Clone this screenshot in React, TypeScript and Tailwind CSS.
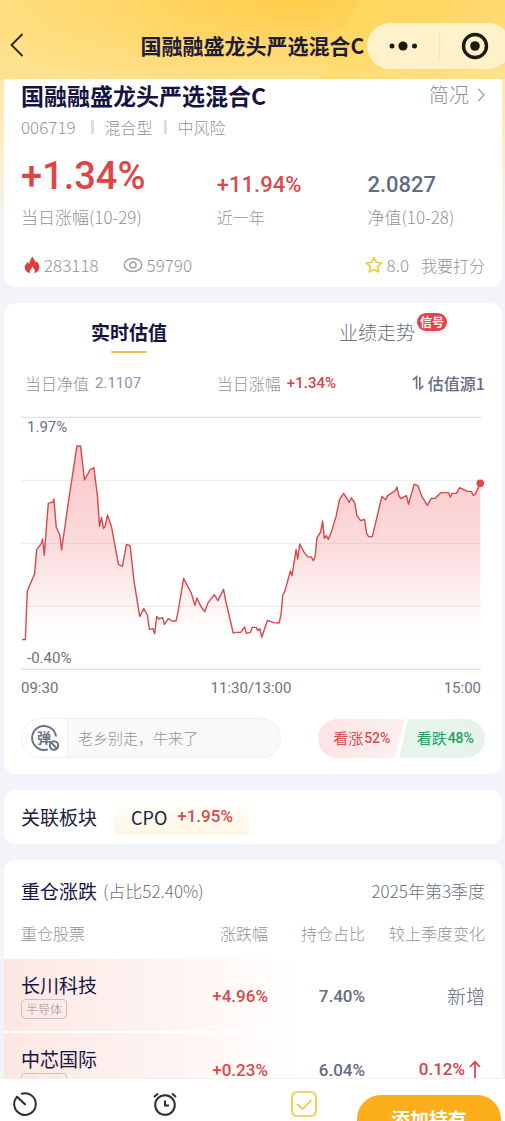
import React from "react";

const TREND = [
  "3,668 13,668 19,522 41,470 47,398 61,380 65,366 70,415 82,259 96,255 99,246 106,331 117,355 122,399 145,239 168,87 179,87 191,189 208,158 219,152 230,239 236,328 242,301 248,334 253,329 260,294 272,329 293,442 305,448 317,382 328,386 340,494 357,599 369,575 380,594 386,637 397,635 402,650 408,598 414,606 426,602 431,622 443,605 454,612 466,612 471,591 489,484 512,528 523,565 529,543 540,567 552,584 563,556 581,533 592,551 609,517 615,549 638,648 644,646 661,646 672,630 678,649 690,646",
  "695,631 707,631 712,641 718,635 724,661 741,610 760,617 776,618 782,591 787,534 793,524 810,462 815,476 827,398 832,426 838,381 850,404 861,419 873,420 879,431 884,420 890,362 901,345 907,312 912,364 918,356 924,367 935,339 947,299 958,247 970,229 987,256 993,242 1004,259 1010,296 1021,311 1033,307 1039,349 1045,359 1056,359 1073,289 1085,238 1096,248 1102,236 1125,221 1130,210 1136,235 1142,245 1159,236 1165,262 1182,202 1193,205 1205,238 1222,265 1233,244 1245,244 1262,227 1285,227 1291,241 1296,229 1309,229 1319,212 1342,223 1354,223 1360,235 1365,233 1377,207 1381,199",
].join(" ");

const GRID_LINES = [1, 190, 379, 568, 757];

const HOLDINGS = [
  { name: "长川科技", sector: "半导体", change: "+4.96%", share: "7.40%", delta: "新增", up: false },
  { name: "中芯国际", sector: "半导体", change: "+0.23%", share: "6.04%", delta: "0.12%", up: true },
];

const NUM = "font-['Roboto','Noto_Sans_CJK_SC',sans-serif] font-medium";

function Header() {
  return (
    <header className="relative flex h-[79px] shrink-0 items-end justify-between bg-[linear-gradient(115deg,transparent_66%,#ffdd6280_66.5%,#ffdd6200_90%),radial-gradient(ellipse_75%_120%_at_58%_0%,#ffcd49,#ffe28f)] pb-2.5 pl-2">
      <button aria-label="返回" className="flex h-12 w-6 items-center">
        <svg viewBox="0 0 16 26" className="h-[26px] w-4" fill="none" stroke="#26221a" strokeWidth="1.8">
          <path d="M14.5 2 L3.5 13 L14.5 24" />
        </svg>
      </button>
      <h1 className="absolute inset-x-0 bottom-5 text-center text-[21px] leading-7 font-bold text-[#1f1c35]">国融融盛龙头严选混合C</h1>
      <div className="relative -mr-1.5 flex h-[46px] w-36 items-center rounded-full bg-[#fff2cb]">
        <button aria-label="更多" className="flex h-full flex-1 items-center justify-center">
          <svg viewBox="0 0 30 12" className="h-3 w-[30px]" fill="#1d1a10">
            <circle cx="4" cy="6" r="2.5" />
            <circle cx="15" cy="6" r="4.6" />
            <circle cx="26.5" cy="6" r="2.5" />
          </svg>
        </button>
        <span className="h-7 w-px bg-[#f3e4b6]" />
        <button aria-label="关闭" className="flex h-full flex-1 items-center justify-center">
          <svg viewBox="0 0 28 28" className="h-7 w-7">
            <circle cx="14" cy="14" r="11.5" fill="none" stroke="#1d1a10" strokeWidth="3.4" />
            <circle cx="14" cy="14" r="4.8" fill="#1d1a10" />
          </svg>
        </button>
      </div>
    </header>
  );
}

function Summary() {
  return (
    <section className="rounded-b-xl bg-white px-[17px] pb-2.5 text-[17px] text-[#949494]">
      <div className="flex h-8 items-center justify-between">
        <h2 className="text-[23px] leading-8 font-bold text-[#15143f]">国融融盛龙头严选混合C</h2>
        <a href="#profile" className="flex items-center gap-2 text-[20px] leading-8 font-light text-[#8f8f8f]">
          简况
          <svg viewBox="0 0 8 14" className="h-3.5 w-2" fill="none" stroke="#a5a5a5" strokeWidth="1.3">
            <path d="M1 .8 L7 7 L1 13.2" />
          </svg>
        </a>
      </div>
      <div className="flex h-8 items-center gap-[11px] text-base font-light">
        <span className="mr-1 text-[17px]">006719</span>
        <span className="h-3.5 w-[3px] bg-[#dedede]" />
        <span>混合型</span>
        <span className="h-3.5 w-[3px] bg-[#dedede]" />
        <span>中风险</span>
      </div>
      <dl className="grid grid-cols-[65fr_50fr_39fr]">
        <div className="flex h-[90px] flex-col-reverse">
          <dt className="pb-0.5 leading-7 font-light">当日涨幅(10-29)</dt>
          <dd className={`${NUM} text-[38px] leading-[54px] text-[#e04545]`}>+1.34%</dd>
        </div>
        <div className="flex h-[90px] flex-col-reverse">
          <dt className="pb-0.5 text-base leading-7 font-light">近一年</dt>
          <dd className={`${NUM} text-[22px] leading-9 text-[#d94a4c]`}>+11.94%</dd>
        </div>
        <div className="flex h-[90px] flex-col-reverse">
          <dt className="pb-0.5 leading-7 font-light whitespace-nowrap">净值(10-28)</dt>
          <dd className={`${NUM} text-[22px] leading-9 text-[#646c80]`}>2.0827</dd>
        </div>
      </dl>
      <div className="mt-5 flex h-6 items-center font-light">
        <svg viewBox="0 0 16 18" className="mr-1 ml-[3px] h-[18px] w-4">
          <path d="M8.3 .6 C9.2 3 11.3 4 11.9 6.8 C12.4 6.2 12.6 5.6 12.6 4.9 C14.2 6.6 15.6 9 15.4 11.6 C15.2 14.6 13 16.8 10.4 17.3 C11.6 15 10.3 12.6 8.3 10.6 C7.7 13 5.1 14.4 6 17.3 C3.1 16.7 .8 14.5 .7 11.5 C.6 9 2.4 7.6 3.7 5.9 C4.2 6.6 4.6 7.3 5.2 7.9 C5.4 5 7 3 8.3 .6 Z" fill="#e33e3e" />
        </svg>
        <span>283118</span>
        <svg viewBox="0 0 20 16" className="mr-1 ml-6 h-4 w-5" fill="none" stroke="#a3a3a3" strokeWidth="1.5">
          <ellipse cx="10" cy="8" rx="8.8" ry="6.6" />
          <circle cx="10" cy="8" r="3" />
        </svg>
        <span>59790</span>
        <button className="ml-auto flex items-center text-base font-light">
          <svg viewBox="0 0 18 18" className="mr-1 h-[18px] w-[18px]" fill="none" stroke="#f2c736" strokeWidth="1.6" strokeLinejoin="round">
            <path d="M9 1.5 L11.3 6.3 L16.6 7 L12.7 10.7 L13.7 16 L9 13.4 L4.3 16 L5.3 10.7 L1.4 7 L6.7 6.3 Z" />
          </svg>
          <span className="mr-3 text-[17px]">8.0</span>
          <span>我要打分</span>
        </button>
      </div>
    </section>
  );
}

function TrendChart() {
  return (
    <div className="mt-5 mr-1 font-['Roboto',sans-serif] text-[15px] leading-5 text-[#6b7282]">
      <div className="relative">
        <svg viewBox="0 0 1383 759" preserveAspectRatio="none" className="block h-[253px] w-full overflow-visible">
          <defs>
            <linearGradient id="rise" x1="0" y1="87" x2="0" y2="655" gradientUnits="userSpaceOnUse">
              <stop offset="0" stopColor="#f04a50" stopOpacity=".32" />
              <stop offset=".5" stopColor="#f04a50" stopOpacity=".2" />
              <stop offset="1" stopColor="#f04a50" stopOpacity="0" />
            </linearGradient>
          </defs>
          {GRID_LINES.map((y, i) => (
            <path key={y} d={`M0 ${y} H1383`} stroke={i === 0 || i === 4 ? "#dde1e4" : "#eceef0"} strokeWidth="3.5" />
          ))}
          <polygon points={`3,668 ${TREND} 1381,668`} fill="url(#rise)" />
          <polyline points={TREND} fill="none" stroke="#d9484b" strokeWidth="4.2" strokeLinejoin="round" />
          <circle cx="1381" cy="199" r="11.5" fill="#e3474a" />
        </svg>
        <span className="absolute top-0 left-1.5">1.97%</span>
        <span className="absolute bottom-0.5 left-1.5">-0.40%</span>
      </div>
      <div className="mt-2 flex justify-between">
        <span>09:30</span>
        <span>11:30/13:00</span>
        <span>15:00</span>
      </div>
    </div>
  );
}

function Valuation() {
  return (
    <section className="mt-4 rounded-xl bg-white px-[17px] pt-3.5 pb-4">
      <div role="tablist" className="-mx-4 grid grid-cols-2 text-[19px] leading-[30px]">
        <button role="tab" aria-selected="true" className="flex flex-col items-center font-bold text-[#15143f]">
          实时估值
          <span className="mt-1 h-0.5 w-9 rounded-full bg-[#ecc04c]" />
        </button>
        <button role="tab" aria-selected="false" className="flex justify-center text-[#6b7282]">
          <span className="relative h-[30px] font-light">
            业绩走势
            <span className="absolute -top-1 left-full ml-0.5 rounded-full bg-[#e24447] px-[3px] text-[12px] leading-[18px] font-bold whitespace-nowrap text-white">信号</span>
          </span>
        </button>
      </div>
      <div className="mt-4 grid h-7 grid-cols-[65fr_50fr_39fr] items-center text-base text-[#949494]">
        <div className="flex items-center gap-1.5 pl-1 font-light">
          当日净值 <span className="font-['Roboto',sans-serif] text-[15px] font-normal">2.1107</span>
        </div>
        <div className="flex items-center gap-1.5 font-light">
          当日涨幅 <span className={`${NUM} text-[15px] text-[#d94049]`}>+1.34%</span>
        </div>
        <button className="flex items-center gap-1 justify-self-end font-medium whitespace-nowrap text-[#646c86]">
          <svg viewBox="0 0 12 16" className="h-4 w-3" fill="none" stroke="#6b7288" strokeWidth="1.6">
            <path d="M.8 5.2 L4.6 1.8 V14" />
            <path d="M7.8 2 V14 L11.4 10.8" />
          </svg>
          估值源1
        </button>
      </div>
      <TrendChart />
      <div className="mt-5 flex items-center justify-between">
        <label className="flex h-10 w-[260px] overflow-hidden rounded-full border border-[#f0f0f0] bg-[#f9f9f9]">
          <span className="flex w-[46px] shrink-0 items-center justify-center border-r border-[#f0f0f0] bg-white">
            <svg viewBox="0 0 30 28" className="h-7 w-[30px]" fill="none" stroke="#667083" strokeWidth="1.9">
              <path d="M26 12.500 A12 12 0 1 0 18 25.300" />
              <text x="7" y="18.500" fontSize="14" fontWeight="700" fill="#667083" stroke="none">弹</text>
              <circle cx="24" cy="21.500" r="4.200" strokeWidth="2" />
              <path d="M21.200 18.600 L26.800 24.400" />
            </svg>
          </span>
          <input aria-label="弹幕" placeholder="老乡别走，牛来了" className="w-full min-w-0 bg-transparent pl-2.5 text-[15px] font-light outline-none placeholder:text-[#949494]" />
        </label>
        <div className="relative flex h-[39px] w-[167px] text-[15px]">
          <svg viewBox="0 0 167 39" preserveAspectRatio="none" className="absolute inset-0 h-full w-full">
            <defs>
              <linearGradient id="bull">
                <stop stopColor="#fde4e5" />
                <stop offset="1" stopColor="#fdf0f0" />
              </linearGradient>
              <linearGradient id="bear">
                <stop stopColor="#e6f5ec" />
                <stop offset="1" stopColor="#e7f3e9" />
              </linearGradient>
            </defs>
            <path d="M19.500 0 H84 Q87 0 86 3 L78 36 Q77 39 74 39 H19.500 A19.500 19.500 0 0 1 19.500 0 Z" fill="url(#bull)" />
            <path d="M92 0 H147.500 A19.500 19.500 0 0 1 147.500 39 H84 Q81 39 82 36 L89 3 Q90 0 92 0 Z" fill="url(#bear)" />
          </svg>
          <button className="relative flex flex-1 items-center justify-center gap-px pl-1 text-[#dd4d50]">
            看涨<span className={`${NUM} text-[14px]`}>52%</span>
          </button>
          <button className="relative flex flex-1 items-center justify-center gap-px pl-1 text-[#2a9d62]">
            看跌<span className={`${NUM} text-[14px]`}>48%</span>
          </button>
        </div>
      </div>
    </section>
  );
}

function RelatedSector() {
  return (
    <section className="mt-4 flex h-[54px] items-center gap-[18px] rounded-xl bg-white px-[17px] text-[19px] text-[#20203c]">
      <h3>关联板块</h3>
      <a href="#cpo" className="flex h-9 items-center gap-2.5 rounded bg-linear-to-b from-white to-[#fff6e2] px-4 text-[18px]">
        CPO <span className={`${NUM} text-[17px] text-[#d94a4c]`}>+1.95%</span>
      </a>
    </section>
  );
}

function Holdings() {
  return (
    <section className="mt-4 rounded-t-xl bg-white pt-[15px]">
      <div className="flex h-8 items-center justify-between px-[17px] text-[17px] text-[#6b7282]">
        <h3 className="flex items-center gap-1.5">
          <span className="text-[19px] text-[#15143f]">重仓涨跌</span>
          <span className="font-light">(占比52.40%)</span>
        </h3>
        <span className="font-light">2025年第3季度</span>
      </div>
      <table className="w-full table-fixed">
        <colgroup>
          <col className="w-[30%]" />
          <col className="w-[23%]" />
          <col className="w-[19.5%]" />
          <col className="w-[27.5%]" />
        </colgroup>
        <thead className="text-base text-[#949494]">
          <tr className="h-[52px] text-right">
            <th className="pl-[17px] text-left font-light">重仓股票</th>
            <th className="font-light">涨跌幅</th>
            <th className="font-light">持仓占比</th>
            <th className="pr-[17px] font-light">较上季度变化</th>
          </tr>
        </thead>
        <tbody>
          {HOLDINGS.map((h) => (
            <tr key={h.name} className="h-[73px] border-b-2 border-white bg-linear-to-r from-[#fde7e3] to-white to-60% text-right">
              <td className="pl-[17px] text-left">
                <div className="pt-0.5 text-[19px] leading-6 text-[#15143f]">{h.name}</div>
                <span className="mt-0.5 block w-fit rounded-sm border border-[#c9bfc0] px-1 text-[12px] leading-[18px] font-light text-[#949494]">{h.sector}</span>
              </td>
              <td className={`${NUM} pt-1 text-[17px] text-[#d94a4c]`}>{h.change}</td>
              <td className={`${NUM} pt-1 text-[17px] text-[#646c80]`}>{h.share}</td>
              <td className="pt-0.5 pr-[17px]">
                {h.up ? (
                  <span className={`${NUM} inline-flex items-center gap-1 text-[17px] text-[#d94049]`}>
                    {h.delta}
                    <svg viewBox="0 0 12 20" className="mr-1 h-5 w-3" fill="none" stroke="#d94049" strokeWidth="1.7">
                      <path d="M6 20 V2 M1 7 L6 1.8 L11 7" />
                    </svg>
                  </span>
                ) : (
                  <span className="text-[19px] font-light text-[#5d6577]">{h.delta}</span>
                )}
              </td>
            </tr>
          ))}
        </tbody>
      </table>
    </section>
  );
}

function BottomBar() {
  return (
    <footer className="flex h-[43px] shrink-0 items-start overflow-hidden border-t border-[#f0f0f2] bg-white pr-1 pl-3">
      <div className="flex flex-1 justify-between pt-3 pr-10">
        <button aria-label="历史">
          <svg viewBox="0 0 26 26" className="h-[26px] w-[26px]" fill="none" stroke="#2e2e2e" strokeWidth="2" strokeLinecap="round">
            <path d="M9.800 2.800 A10.800 10.800 0 1 1 4.700 6.200" />
            <path d="M5 5.800 L13 13.200" strokeWidth="2.200" />
          </svg>
        </button>
        <button aria-label="提醒">
          <svg viewBox="0 0 26 26" className="h-[26px] w-[26px]" fill="none" stroke="#2e2e2e" strokeWidth="2">
            <circle cx="13" cy="14" r="9.800" />
            <path d="M13 9.500 V14.500 H17" />
            <path d="M2 6 L6 2.500 M24 6 L20 2.500" />
          </svg>
        </button>
        <button aria-label="自选">
          <svg viewBox="0 0 26 26" className="h-[26px] w-[26px]" fill="none" stroke="#f3c63e" strokeWidth="1.700">
            <rect x="1" y="1" width="24" height="24" rx="5" />
            <path d="M6 13 L11.500 18 L20.500 9" />
          </svg>
        </button>
      </div>
      <button className="mt-4 h-12 w-36 rounded-full bg-[#fdae1b] text-[19px] font-bold text-white">添加持有</button>
    </footer>
  );
}

export default function App() {
  return (
    <div className="flex h-screen flex-col overflow-hidden bg-[#f3f4fa] font-['Noto_Sans_CJK_SC',sans-serif]">
      <Header />
      <main className="min-h-0 flex-1 overflow-y-auto bg-[linear-gradient(#ffe9a6,#f3f4fa_161px)] pr-[3px] pl-1 [scrollbar-width:none]">
        <Summary />
        <Valuation />
        <RelatedSector />
        <Holdings />
      </main>
      <BottomBar />
    </div>
  );
}
